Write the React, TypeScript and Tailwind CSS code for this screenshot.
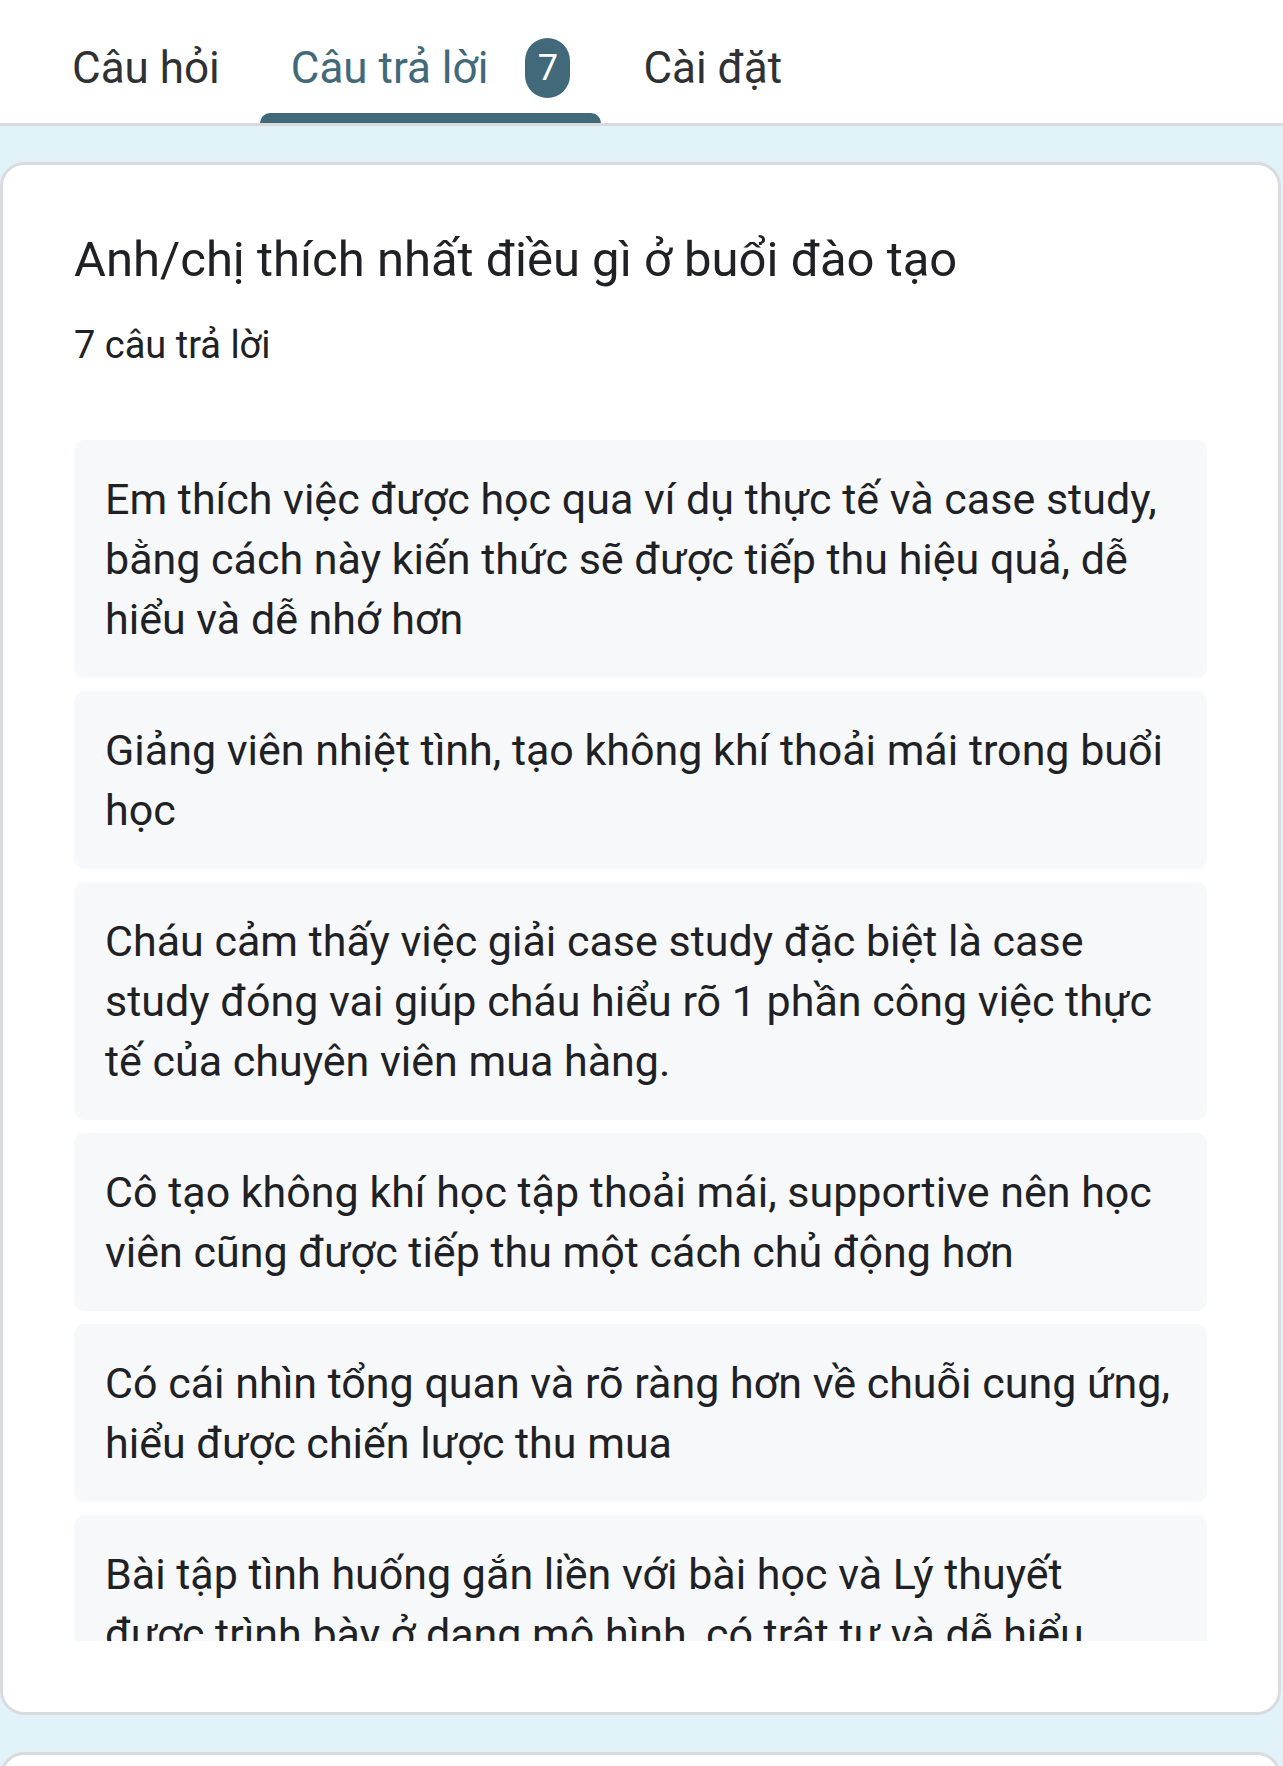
import React from "react";

const answers: string[][] = [
  [
    "Em thích việc được học qua ví dụ thực tế và case study,",
    "bằng cách này kiến thức sẽ được tiếp thu hiệu quả, dễ",
    "hiểu và dễ nhớ hơn",
  ],
  ["Giảng viên nhiệt tình, tạo không khí thoải mái trong buổi", "học"],
  [
    "Cháu cảm thấy việc giải case study đặc biệt là case",
    "study đóng vai giúp cháu hiểu rõ 1 phần công việc thực",
    "tế của chuyên viên mua hàng.",
  ],
  [
    "Cô tạo không khí học tập thoải mái, supportive nên học",
    "viên cũng được tiếp thu một cách chủ động hơn",
  ],
  [
    "Có cái nhìn tổng quan và rõ ràng hơn về chuỗi cung ứng,",
    "hiểu được chiến lược thu mua",
  ],
  [
    "Bài tập tình huống gắn liền với bài học và Lý thuyết",
    "được trình bày ở dạng mô hình, có trật tự và dễ hiểu",
  ],
  ["Nội dung bài giảng rõ ràng, dễ áp dụng vào công việc"],
];

export default function App() {
  return (
    <div
      className="w-[1283px] h-[1766px] overflow-hidden bg-[#e1f3f8] text-[#202124]"
      style={{ fontFamily: "Roboto, 'Noto Sans', sans-serif" }}
    >
      {/* Tabs header */}
      <div className="h-[126px] bg-white border-b-[3px] border-[#d8dadd] flex items-end pl-[72px]">
        <div className="h-[123px] pt-[12px] flex items-center">
          <span className="text-[44px] text-[#2f3133] leading-none">Câu hỏi</span>
        </div>
        <div className="relative ml-[40px] h-[123px] pt-[12px] px-[31px] flex items-center">
          <span className="text-[44px] text-[#41697a] leading-none">Câu trả lời</span>
          <span className="ml-[37px] w-[45px] h-[60px] rounded-full bg-[#41697a] text-white text-[36px] flex items-center justify-center leading-none">
            7
          </span>
          <div className="absolute left-0 right-0 bottom-0 h-[10px] rounded-t-[10px] bg-[#41697a]" />
        </div>
        <div className="ml-[42px] h-[123px] pt-[12px] flex items-center">
          <span className="text-[44px] text-[#2f3133] leading-none">Cài đặt</span>
        </div>
      </div>

      {/* Card */}
      <div className="mt-[36px] mr-[2px] h-[1553px] bg-white border-[3px] border-[#d9dcdf] rounded-[24px] pt-[67px] px-[71px] pb-[71px] flex flex-col">
        <div className="text-[49px] leading-[56px]">
          Anh/chị thích nhất điều gì ở buổi đào tạo
        </div>
        <div className="mt-[37px] text-[38px] leading-[40px]">7 câu trả lời</div>
        <div className="mt-[75px] flex-1 overflow-hidden flex flex-col gap-[13px]">
          {answers.map((lines, i) => (
            <div
              key={i}
              className="bg-[#f7f8fa] rounded-[10px] px-[31px] py-[29px] text-[43px] leading-[60px] whitespace-nowrap"
            >
              {lines.map((l, j) => (
                <div key={j}>{l}</div>
              ))}
            </div>
          ))}
        </div>
      </div>

      <div className="mt-[37px] mr-[2px] h-[40px] bg-white border-[3px] border-[#d9dcdf] rounded-t-[24px]" />
    </div>
  );
}
